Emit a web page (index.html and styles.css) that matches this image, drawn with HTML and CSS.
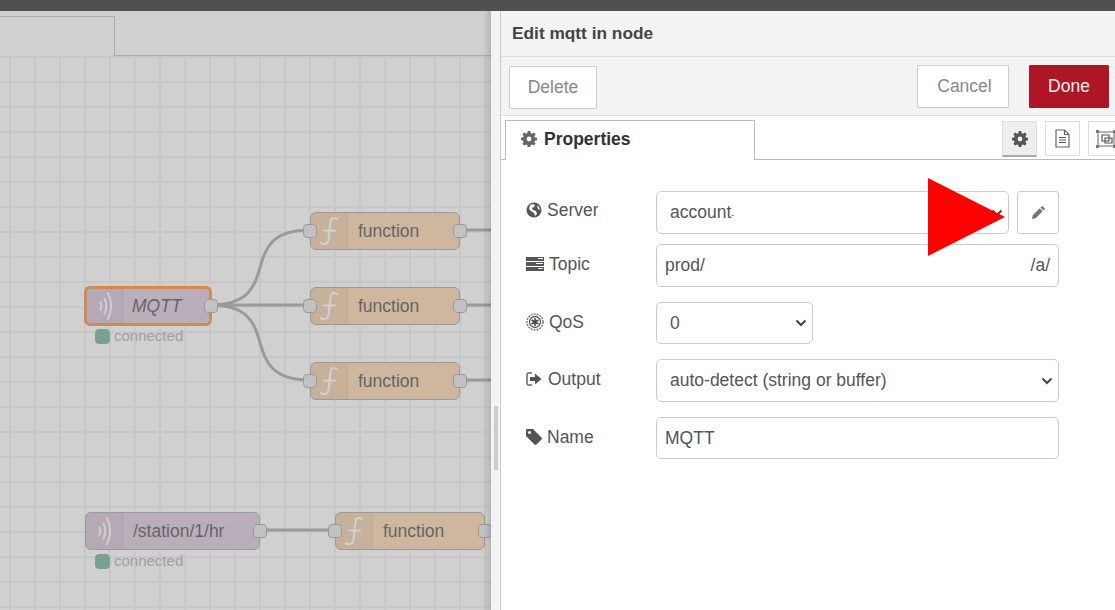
FILE: index.html
```html
<!DOCTYPE html>
<html lang="en">
<head>
  <meta charset="UTF-8">
  <title>Edit mqtt in node</title>
  <link rel="stylesheet" href="styles.css">
</head>
<body>
  <svg class="sprites" width="0" height="0">
    <symbol id="i-wave" viewBox="0 0 16 32">
      <path d="M3 12c1.300 2.600 1.300 5.400 0 8M7.500 8c2.300 5 2.300 11 0 16M11 2c4.600 8.800 4.600 19.200 0 28" fill="none" stroke="currentColor" stroke-width="2" stroke-linecap="round"/>
    </symbol>
    <symbol id="i-func" viewBox="0 0 18 30">
      <path d="M17 3C13.500 1 11 2 10.500 6L8.500 24C8 28 4.500 29 1 27M4 14.500H15" fill="none" stroke="currentColor" stroke-width="2.200" stroke-linecap="round"/>
    </symbol>
    <symbol id="i-gear" viewBox="0 0 16 16">
      <path fill-rule="evenodd" d="M6.700 0h2.600l.4 2.200 1.300.6L12.900 1.500l1.800 1.800-1.300 1.900.5 1.200 2.100.3v2.600l-2.100.4-.5 1.300 1.200 1.800-1.800 1.800-1.800-1.200-1.300.5-.4 2.100H6.700l-.4-2.100-1.300-.5-1.800 1.200-1.800-1.800 1.200-1.800-.5-1.300L0 9.300V6.700l2.100-.3.500-1.300-1.200-1.800 1.800-1.800L5 2.800l1.300-.6zM8 5.600a2.400 2.400 0 1 0 0 4.800 2.400 2.400 0 0 0 0-4.800z" fill="currentColor"/>
    </symbol>
  </svg>

  <div class="topbar"></div>

  <div class="main">
    <div class="workspace">
      <div class="tabstrip"><div class="flow-tab"></div></div>
      <div class="canvas">
        <svg class="wires" width="491" height="554">
          <path d="M210 249C288 249 232 174 310 174"/>
          <path d="M210 249H310"/>
          <path d="M210 249C288 249 232 324 310 324"/>
          <path d="M460 174H491M460 249H491M460 324H491"/>
          <path d="M260 474H335"/>
        </svg>

        <div class="node node-mqtt node-picked pos-mqtt-a">
          <span class="node-icon"><svg><use href="#i-wave"/></svg></span>
          <span class="node-label node-label-italic">MQTT</span>
          <i class="port port-out"></i>
        </div>
        <div class="status pos-status-a"><i></i>connected</div>

        <div class="node node-func pos-func-a">
          <i class="port port-in"></i>
          <span class="node-icon"><svg><use href="#i-func"/></svg></span>
          <span class="node-label">function</span>
          <i class="port port-out"></i>
        </div>
        <div class="node node-func pos-func-b">
          <i class="port port-in"></i>
          <span class="node-icon"><svg><use href="#i-func"/></svg></span>
          <span class="node-label">function</span>
          <i class="port port-out"></i>
        </div>
        <div class="node node-func pos-func-c">
          <i class="port port-in"></i>
          <span class="node-icon"><svg><use href="#i-func"/></svg></span>
          <span class="node-label">function</span>
          <i class="port port-out"></i>
        </div>

        <div class="node node-mqtt pos-mqtt-b">
          <span class="node-icon"><svg><use href="#i-wave"/></svg></span>
          <span class="node-label">/station/1/hr</span>
          <i class="port port-out"></i>
        </div>
        <div class="status pos-status-b"><i></i>connected</div>

        <div class="node node-func pos-func-d">
          <i class="port port-in"></i>
          <span class="node-icon"><svg><use href="#i-func"/></svg></span>
          <span class="node-label">function</span>
          <i class="port port-out"></i>
        </div>
      </div>
      <div class="shade"></div>
    </div>

    <div class="separator"><div class="handle"></div></div>

    <section class="tray">
      <header class="tray-title">Edit mqtt in node</header>
      <div class="tray-toolbar">
        <button class="btn btn-delete">Delete</button>
        <div class="tray-actions">
          <button class="btn btn-cancel">Cancel</button>
          <button class="btn btn-done">Done</button>
        </div>
      </div>

      <div class="tray-tabs">
        <div class="tab">
          <svg class="tab-gear"><use href="#i-gear"/></svg>
          Properties
        </div>
        <div class="tab-icons">
          <span class="tab-icon tab-icon-on"><svg class="tab-gear"><use href="#i-gear"/></svg></span>
          <span class="tab-icon">
            <svg width="15" height="19" viewBox="0 0 15 19"><path d="M1 1h8.500L14 5.500V18H1zM9.500 1v4.500H14" fill="none" stroke="#666" stroke-width="1.200"/><path d="M4 8.500h7M4 11h7M4 13.500h7" stroke="#555" stroke-width="1.200"/></svg>
          </span>
          <span class="tab-icon">
            <svg width="20" height="18" viewBox="0 0 20 18"><path d="M2 2h16v14H2z" fill="none" stroke="#666"/><path d="M6 5h7v6H6zM9 8h7v5H9z" fill="none" stroke="#555" stroke-width="1.200"/><path d="M0 0h3v3H0zM17 0h3v3h-3zM0 15h3v3H0zM17 15h3v3h-3z" fill="#777"/></svg>
          </span>
        </div>
      </div>

      <form class="form">
        <div class="row row-server">
          <label class="label">
            <svg class="label-icon" width="16" height="16" viewBox="0 0 16 16"><circle cx="8" cy="8" r="7.500" fill="#555"/><path d="M4 3l3-1 2 1-1 2-2 1 1 2 3 1 1 3-2 2-1-3-3-2-2-2zM11 3l2 2 1 3-2-1z" fill="#fff"/></svg>
            Server
          </label>
          <div class="select select-server"><span>account<small>-</small></span><svg class="chev" width="12" height="8" viewBox="0 0 12 8"><path d="M1.500 1.500L6 6l4.500-4.500" fill="none" stroke="#444" stroke-width="2"/></svg></div>
          <button class="edit-btn" type="button">
            <svg width="15" height="15" viewBox="0 0 15 15"><path d="M10.500 1.500a1 1 0 0 1 1.400 0l1.600 1.600a1 1 0 0 1 0 1.400l-1 1-3-3zM8.700 3.300l3 3-7 7L1 14l.7-3.700z" fill="#777"/></svg>
          </button>
        </div>
        <div class="row row-topic">
          <label class="label">
            <svg class="label-icon" width="18" height="14" viewBox="0 0 18 14"><path d="M0 0h18v4H0zM0 5h18v4H0zM0 10h18v4H0z" fill="#555"/><path d="M12 1.500h5M10 6.500h7M12 11.500h5" stroke="#fff" stroke-width="1"/></svg>
            Topic
          </label>
          <div class="input input-topic"><span>prod/</span><span>/a/</span></div>
        </div>
        <div class="row row-qos">
          <label class="label">
            <svg class="label-icon" width="18" height="18" viewBox="0 0 18 18"><circle cx="9" cy="9" r="8" fill="none" stroke="#777" stroke-width="1.500" stroke-dasharray="2 1"/><circle cx="9" cy="9" r="5.500" fill="none" stroke="#555" stroke-width="1.300"/><path d="M9 5v8M5.500 7l7 4M12.500 7l-7 4" stroke="#444" stroke-width="1.500"/></svg>
            QoS
          </label>
          <div class="select select-qos"><span>0</span><svg class="chev" width="12" height="8" viewBox="0 0 12 8"><path d="M1.500 1.500L6 6l4.500-4.500" fill="none" stroke="#444" stroke-width="2"/></svg></div>
        </div>
        <div class="row row-output">
          <label class="label">
            <svg class="label-icon" width="16" height="14" viewBox="0 0 16 14"><path d="M6 1H2.500C1.500 1 1 1.500 1 2.500v9c0 1 .5 1.500 1.500 1.500H6" fill="none" stroke="#666" stroke-width="1.500"/><path d="M4 5h5V1.500L15.500 7 9 12.500V9H4z" fill="#555"/></svg>
            Output
          </label>
          <div class="select select-output"><span>auto-detect (string or buffer)</span><svg class="chev" width="12" height="8" viewBox="0 0 12 8"><path d="M1.500 1.500L6 6l4.500-4.500" fill="none" stroke="#444" stroke-width="2"/></svg></div>
        </div>
        <div class="row row-name">
          <label class="label">
            <svg class="label-icon" width="16" height="16" viewBox="0 0 16 16"><path fill-rule="evenodd" d="M0 1.500C0 .6.600 0 1.500 0H7l8.500 8.500c.6.600.6 1.400 0 2L10.500 15.500c-.6.600-1.400.6-2 0L0 7zM3.500 2a1.500 1.500 0 1 0 0 3 1.500 1.500 0 0 0 0-3z" fill="#555"/></svg>
            Name
          </label>
          <div class="input">MQTT</div>
        </div>
      </form>

      <svg class="arrow" width="77" height="78" viewBox="0 0 77 78"><path d="M0 0L77 39 0 78z" fill="#f00"/></svg>
    </section>
  </div>
</body>
</html>
```

FILE: styles.css
```css
* {
  box-sizing: border-box;
  margin: 0;
  padding: 0;
}

html,
body {
  height: 100%;
  overflow: hidden;
}

body {
  display: flex;
  flex-direction: column;
  background: #fff;
  color: #555;
  font-family: "Liberation Sans", Arial, sans-serif;
  font-size: 16px;
}

.sprites {
  position: absolute;
}

.topbar {
  height: 11px;
  background: #505050;
  flex: none;
}

.main {
  display: flex;
  flex: 1;
  min-height: 0;
}

/* workspace, dimmed by the open tray */
.workspace {
  position: relative;
  width: 491px;
  flex: none;
  display: flex;
  flex-direction: column;
  overflow: hidden;
  background: #fff;
}

.shade {
  position: absolute;
  inset: 0;
  background:
    linear-gradient(to left, rgba(0, 0, 0, 0.13), transparent 8px),
    rgba(155, 155, 155, 0.47);
  pointer-events: none;
}

.tabstrip {
  height: 45px;
  flex: none;
  border-bottom: 1px solid #bbb;
  padding-top: 5px;
}

.flow-tab {
  width: 115px;
  height: 40px;
  background: #fff;
  border-top: 1px solid #bbb;
  border-right: 1px solid #bbb;
}

.canvas {
  position: relative;
  flex: 1;
  background-color: #fff;
  background-image:
    linear-gradient(to right, #eee 2px, transparent 2px),
    linear-gradient(to bottom, #eee 2px, transparent 2px);
  background-size: 25px 25px;
  background-position: 9px 0;
}

.wires {
  position: absolute;
  left: 0;
  top: 0;
}

.wires path {
  fill: none;
  stroke: #999;
  stroke-width: 3px;
}

/* nodes on the flow canvas */
.node {
  position: absolute;
  height: 38px;
  display: flex;
  align-items: center;
  border: 1px solid #999;
  border-radius: 6px;
}

.pos-mqtt-a {
  left: 84px;
  top: 230px;
  width: 128px;
  height: 40px;
}

.pos-mqtt-b {
  left: 85px;
  top: 456px;
  width: 175px;
}

.pos-func-a {
  left: 310px;
  top: 156px;
  width: 150px;
}

.pos-func-b {
  left: 310px;
  top: 231px;
  width: 150px;
}

.pos-func-c {
  left: 310px;
  top: 306px;
  width: 150px;
}

.pos-func-d {
  left: 335px;
  top: 456px;
  width: 150px;
}

.node-mqtt {
  background: #d8bfd8;
}

.node-func {
  background: #fdd0a2;
}

.node-picked {
  border: 3px solid #ff7f0e;
}

.node-icon {
  width: 37px;
  height: 100%;
  flex: none;
  display: flex;
  align-items: center;
  justify-content: center;
  background: rgba(0, 0, 0, 0.05);
  border-right: 1px solid rgba(0, 0, 0, 0.07);
  border-radius: 4px 0 0 4px;
  color: #fff;
}

.node-picked .node-icon {
  width: 36px;
}

.node-icon svg {
  width: 18px;
  height: 30px;
}

.node-label {
  padding-left: 10px;
  color: #333;
  font-size: 17.500px;
  white-space: nowrap;
}

.node-label-italic {
  font-style: italic;
  padding-left: 9px;
}

.port {
  position: absolute;
  top: 50%;
  width: 14px;
  height: 14px;
  margin-top: -7px;
  background: #e4e4e4;
  border: 1px solid #999;
  border-radius: 4px;
}

.port-in {
  left: -8px;
}

.port-out {
  right: -8px;
}

.node-picked .port-out {
  right: -9px;
}

.status {
  position: absolute;
  display: flex;
  align-items: center;
  gap: 4px;
  color: #a4a4a4;
  font-size: 15px;
  line-height: 16px;
}

.pos-status-a {
  left: 95px;
  top: 272px;
}

.pos-status-b {
  left: 95px;
  top: 497px;
}

.status i {
  width: 15px;
  height: 15px;
  background: #5a8;
  border: 1px solid #5a8;
  border-radius: 4px;
}

.separator {
  position: relative;
  width: 10px;
  flex: none;
  background: #f3f3f3;
  border-right: 1px solid #ccc;
}

.handle {
  position: absolute;
  left: 3px;
  top: 395px;
  width: 4px;
  height: 64px;
  background: #ccc;
}

/* edit tray */
.tray {
  position: relative;
  flex: 1;
  min-width: 0;
  overflow: hidden;
  background: #fff;
}

.tray-title {
  height: 46px;
  padding: 13px 0 0 11px;
  background: #f3f3f3;
  color: #444;
  font-size: 17.300px;
  font-weight: 700;
  line-height: 19px;
  border-bottom: 1px solid #ddd;
}

.tray-toolbar {
  height: 59px;
  display: flex;
  justify-content: space-between;
  padding: 9px 6px 0 8px;
  background: #f3f3f3;
  border-bottom: 1px solid #ddd;
}

.tray-actions {
  display: flex;
  gap: 20px;
  margin-top: -1px;
}

.btn {
  height: 43px;
  border: 1px solid #ccc;
  background: #fff;
  color: #888;
  font-family: inherit;
  font-size: 17.500px;
  border-radius: 1px;
  padding-bottom: 1px;
}

.btn-delete {
  width: 88px;
}

.btn-cancel {
  width: 92px;
  padding-left: 3px;
}

.btn-done {
  width: 80px;
  background: #ad1625;
  border-color: #ad1625;
  color: #eee;
}

.tray-tabs {
  position: relative;
  height: 44px;
  padding: 4px 0 0 4px;
  display: flex;
  border-bottom: 1px solid #bbb;
}

.tab {
  width: 250px;
  height: 40px;
  display: flex;
  align-items: center;
  gap: 7px;
  padding-left: 15px;
  padding-bottom: 3px;
  background: #fff;
  border: 1px solid #bbb;
  border-bottom: none;
  color: #333;
  font-size: 17.500px;
  font-weight: 700;
}

.tab-gear {
  width: 16px;
  height: 16px;
  color: #666;
}

.tab-icons {
  position: absolute;
  left: 501px;
  top: 5px;
  display: flex;
  gap: 8px;
}

.tab-icon {
  width: 35px;
  height: 35px;
  flex: none;
  display: flex;
  align-items: center;
  justify-content: center;
  border: 1px solid #ddd;
  background: #fff;
}

.tab-icon-on {
  background: #eee;
  border-bottom: 2px solid #aaa;
  height: 36px;
}

.tab-icon-on .tab-gear {
  color: #555;
}

.form {
  padding: 31px 0 0 25px;
  color: #555;
  font-size: 17.500px;
}

.row {
  display: flex;
  align-items: flex-start;
}

.row-server {
  margin-bottom: 10px;
}

.row-topic,
.row-qos,
.row-output {
  margin-bottom: 15px;
}

.label {
  width: 130px;
  flex: none;
  display: flex;
  align-items: center;
  gap: 5px;
  height: 32px;
  margin-top: 3px;
}

.row-topic .label,
.row-qos .label,
.row-output .label,
.row-name .label {
  margin-top: 4px;
}

.row-output .label {
  gap: 6px;
}

.select,
.input,
.edit-btn {
  height: 43px;
  border: 1px solid #ccc;
  border-radius: 5px;
  background: #fff;
}

.select,
.input {
  display: flex;
  align-items: center;
  color: #555;
  font-size: 17.500px;
}

.select {
  justify-content: space-between;
  padding: 0 5px 0 13px;
}

.select small {
  font-size: 9px;
}

.input {
  padding: 0 8px;
  width: 403px;
}

.select-server {
  width: 353px;
}

.select-qos {
  width: 157px;
  height: 42px;
}

.select-output {
  width: 403px;
}

.row-name .input {
  height: 42px;
}

.input-topic {
  justify-content: space-between;
}

.edit-btn {
  width: 42px;
  margin-left: 8px;
  display: flex;
  align-items: center;
  justify-content: center;
  border-radius: 3px;
}

.arrow {
  position: absolute;
  left: 427px;
  top: 167px;
}
```
